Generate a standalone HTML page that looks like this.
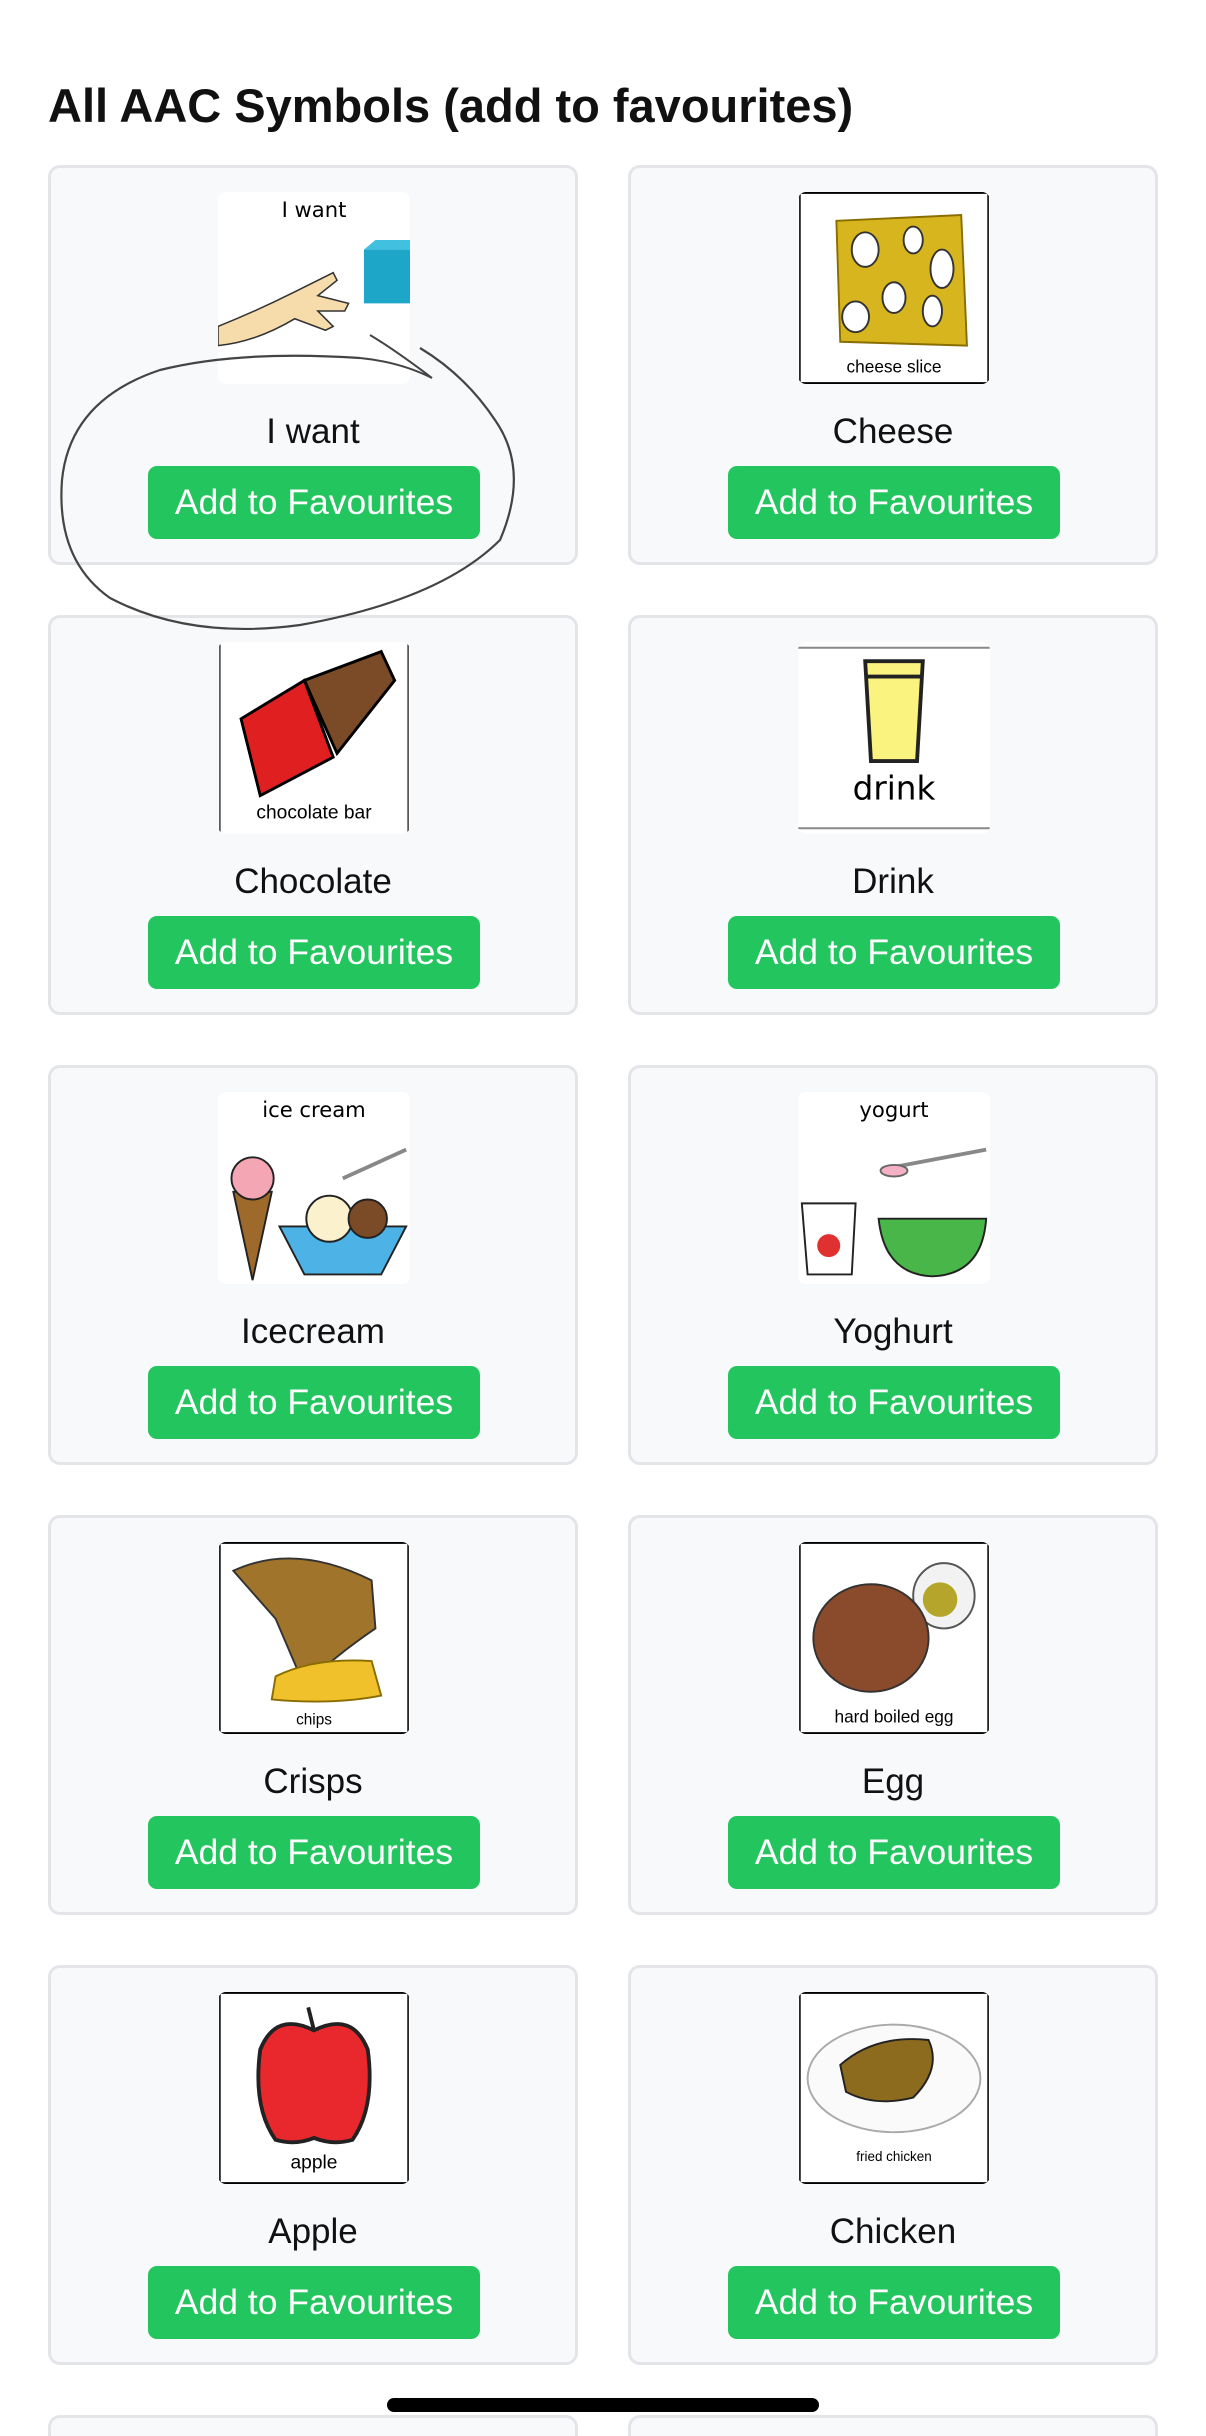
<!DOCTYPE html>
<html style="height:2436px;overflow:hidden"><head><meta charset="utf-8">
<style>
*{margin:0;padding:0;box-sizing:border-box}
body{width:1206px;height:2436px;background:#fff;position:relative;overflow:hidden;font-family:"Liberation Sans",Arial,sans-serif;color:#111}
h1{position:absolute;left:48px;top:78px;font-size:47px;font-weight:bold;letter-spacing:0}
.card{position:absolute;width:530px;height:400px;background:#f8f9fb;border:3px solid #e3e5e9;border-radius:12px}
.img{position:absolute;left:167px;top:24px;width:192px;height:192px;background:#fff;border-radius:8px;overflow:hidden}
.img svg{width:192px;height:192px;display:block}
.lbl{position:absolute;left:0;right:0;top:244px;text-align:center;font-size:35px}
.btn{position:absolute;left:97px;top:298px;width:332px;height:73px;background:#23c55e;border-radius:9px;color:#fff;font-size:35.5px;text-align:center;line-height:73px}
.home{position:absolute;left:387px;top:2398px;width:432px;height:14px;background:#000;border-radius:7px}
</style></head><body>
<h1>All AAC Symbols (add to favourites)</h1>

<div class="card" style="left:48px;top:165px">
<div class="img"><svg viewBox="0 0 100 100"><text x="50" y="13" font-size="11" text-anchor="middle" font-family="DejaVu Sans">I want</text><path d="M0 70 Q20 62 40 52 L60 42 L62 46 L52 54 L68 58 L66 62 L52 62 L60 70 L56 72 L40 66 Q20 78 0 80Z" fill="#f6dcaa" stroke="#333" stroke-width=".8"/><rect x="76" y="30" width="24" height="28" fill="#1ea6c9"/><path d="M76 30 L82 25 L100 25 L100 30" fill="#41c0e0"/></svg></div>
<div class="lbl">I want</div><div class="btn">Add to Favourites</div></div>

<div class="card" style="left:628px;top:165px">
<div class="img"><svg viewBox="0 0 100 100"><path d="M1 0H99M1 100H99" stroke="#000" stroke-width="2"/><path d="M1 0V100M99 0V100" stroke="#000" stroke-width=".8"/><path d="M20 15 L85 12 L88 80 L22 78Z" fill="#d7b51e" stroke="#8a6d00"/><ellipse cx="35" cy="30" rx="7" ry="9" fill="#fff" stroke="#333"/><ellipse cx="60" cy="25" rx="5" ry="7" fill="#fff" stroke="#333"/><ellipse cx="75" cy="40" rx="6" ry="10" fill="#fff" stroke="#333"/><ellipse cx="50" cy="55" rx="6" ry="8" fill="#fff" stroke="#333"/><ellipse cx="30" cy="65" rx="7" ry="8" fill="#fff" stroke="#333"/><ellipse cx="70" cy="62" rx="5" ry="8" fill="#fff" stroke="#333"/><text x="50" y="94" font-size="9" text-anchor="middle">cheese slice</text></svg></div>
<div class="lbl">Cheese</div><div class="btn">Add to Favourites</div></div>

<div class="card" style="left:48px;top:615px">
<div class="img"><svg viewBox="0 0 100 100"><path d="M1 0V100M99 0V100" stroke="#000" stroke-width=".6"/><path d="M12 40 L45 20 L60 60 L22 80Z" fill="#e02020" stroke="#000" stroke-width="1.5"/><path d="M45 20 L85 5 L92 20 L62 58Z" fill="#7b4a26" stroke="#000" stroke-width="1.5"/><text x="50" y="92" font-size="10" text-anchor="middle">chocolate bar</text></svg></div>
<div class="lbl">Chocolate</div><div class="btn">Add to Favourites</div></div>

<div class="card" style="left:628px;top:615px">
<div class="img"><svg viewBox="0 0 100 100"><path d="M0 3H100M0 97H100" stroke="#888" stroke-width="1"/><path d="M35 10 H65 L62 62 H38Z" fill="#fbf37f" stroke="#222" stroke-width="2"/><path d="M35 18H65" stroke="#222" stroke-width="2"/><text x="50" y="82" font-size="17" text-anchor="middle" font-family="DejaVu Sans">drink</text></svg></div>
<div class="lbl">Drink</div><div class="btn">Add to Favourites</div></div>

<div class="card" style="left:48px;top:1065px">
<div class="img"><svg viewBox="0 0 100 100"><text x="50" y="13" font-size="11" text-anchor="middle" font-family="DejaVu Sans">ice cream</text><path d="M8 52 L28 52 L18 98Z" fill="#9e6a2c" stroke="#222"/><circle cx="18" cy="45" r="11" fill="#f4a6b4" stroke="#222"/><path d="M32 70 H98 L85 95 H45Z" fill="#4db3e6" stroke="#222"/><circle cx="58" cy="66" r="12" fill="#fbf1cc" stroke="#222"/><circle cx="78" cy="66" r="10" fill="#7b4a26" stroke="#222"/><path d="M65 45 L98 30" stroke="#888" stroke-width="2"/></svg></div>
<div class="lbl">Icecream</div><div class="btn">Add to Favourites</div></div>

<div class="card" style="left:628px;top:1065px">
<div class="img"><svg viewBox="0 0 100 100"><text x="50" y="13" font-size="11" text-anchor="middle" font-family="DejaVu Sans">yogurt</text><path d="M2 58 H30 L28 95 H5Z" fill="#fff" stroke="#222"/><circle cx="16" cy="80" r="6" fill="#e03030"/><path d="M42 66 H98 Q96 95 70 96 Q45 95 42 66Z" fill="#48b648" stroke="#222"/><path d="M45 40 L98 30" stroke="#888" stroke-width="2"/><ellipse cx="50" cy="41" rx="7" ry="3" fill="#f4b0c4" stroke="#666"/></svg></div>
<div class="lbl">Yoghurt</div><div class="btn">Add to Favourites</div></div>

<div class="card" style="left:48px;top:1515px">
<div class="img"><svg viewBox="0 0 100 100"><path d="M1 0H99M1 100H99" stroke="#000" stroke-width="2"/><path d="M1 0V100M99 0V100" stroke="#000" stroke-width=".8"/><path d="M8 15 Q40 0 80 20 L82 45 Q60 60 45 75 L30 40Z" fill="#a0742a" stroke="#333"/><path d="M30 70 Q50 60 80 62 L85 80 Q60 85 28 82Z" fill="#f0c12a" stroke="#8a6d00"/><text x="50" y="95" font-size="8" text-anchor="middle">chips</text></svg></div>
<div class="lbl">Crisps</div><div class="btn">Add to Favourites</div></div>

<div class="card" style="left:628px;top:1515px">
<div class="img"><svg viewBox="0 0 100 100"><path d="M1 0H99M1 100H99" stroke="#000" stroke-width="2"/><path d="M1 0V100M99 0V100" stroke="#000" stroke-width=".8"/><ellipse cx="76" cy="28" rx="16" ry="17" fill="#f2f2f2" stroke="#555"/><circle cx="74" cy="30" r="9" fill="#b5a52a"/><ellipse cx="38" cy="50" rx="30" ry="28" fill="#8a4a2c" stroke="#333"/><text x="50" y="94" font-size="9" text-anchor="middle">hard boiled egg</text></svg></div>
<div class="lbl">Egg</div><div class="btn">Add to Favourites</div></div>

<div class="card" style="left:48px;top:1965px">
<div class="img"><svg viewBox="0 0 100 100"><path d="M1 0H99M1 100H99" stroke="#000" stroke-width="2"/><path d="M1 0V100M99 0V100" stroke="#000" stroke-width=".8"/><path d="M50 20 Q30 10 22 30 Q18 60 30 77 Q40 80 50 76 Q60 80 70 77 Q82 60 78 30 Q70 10 50 20Z" fill="#e8282c" stroke="#222" stroke-width="2"/><path d="M50 20 L47 8" stroke="#222" stroke-width="2"/><text x="50" y="92" font-size="10" text-anchor="middle">apple</text></svg></div>
<div class="lbl">Apple</div><div class="btn">Add to Favourites</div></div>

<div class="card" style="left:628px;top:1965px">
<div class="img"><svg viewBox="0 0 100 100"><path d="M1 0H99M1 100H99" stroke="#000" stroke-width="2"/><path d="M1 0V100M99 0V100" stroke="#000" stroke-width=".8"/><ellipse cx="50" cy="45" rx="45" ry="28" fill="#fafafa" stroke="#aaa"/><path d="M22 38 Q40 22 68 25 Q75 40 60 55 Q40 60 25 52Z" fill="#8c6a1e" stroke="#222"/><text x="50" y="88" font-size="7" text-anchor="middle">fried chicken</text></svg></div>
<div class="lbl">Chicken</div><div class="btn">Add to Favourites</div></div>

<div class="card" style="left:48px;top:2415px;height:21px;border-bottom:none;border-radius:12px 12px 0 0"></div>
<div class="card" style="left:628px;top:2415px;height:21px;border-bottom:none;border-radius:12px 12px 0 0"></div>

<svg style="position:absolute;left:0;top:0" width="1206" height="700">
<path d="M360 358 Q240 350 160 370 Q70 400 62 480 Q56 560 110 598 Q190 640 300 625 Q440 600 500 540 Q530 470 495 420 Q465 375 420 348" fill="none" stroke="#444" stroke-width="2.2"/>
<path d="M360 358 Q400 362 432 378 Q395 350 370 335" fill="none" stroke="#444" stroke-width="2"/>
</svg>
<div class="home"></div>
</body></html>
